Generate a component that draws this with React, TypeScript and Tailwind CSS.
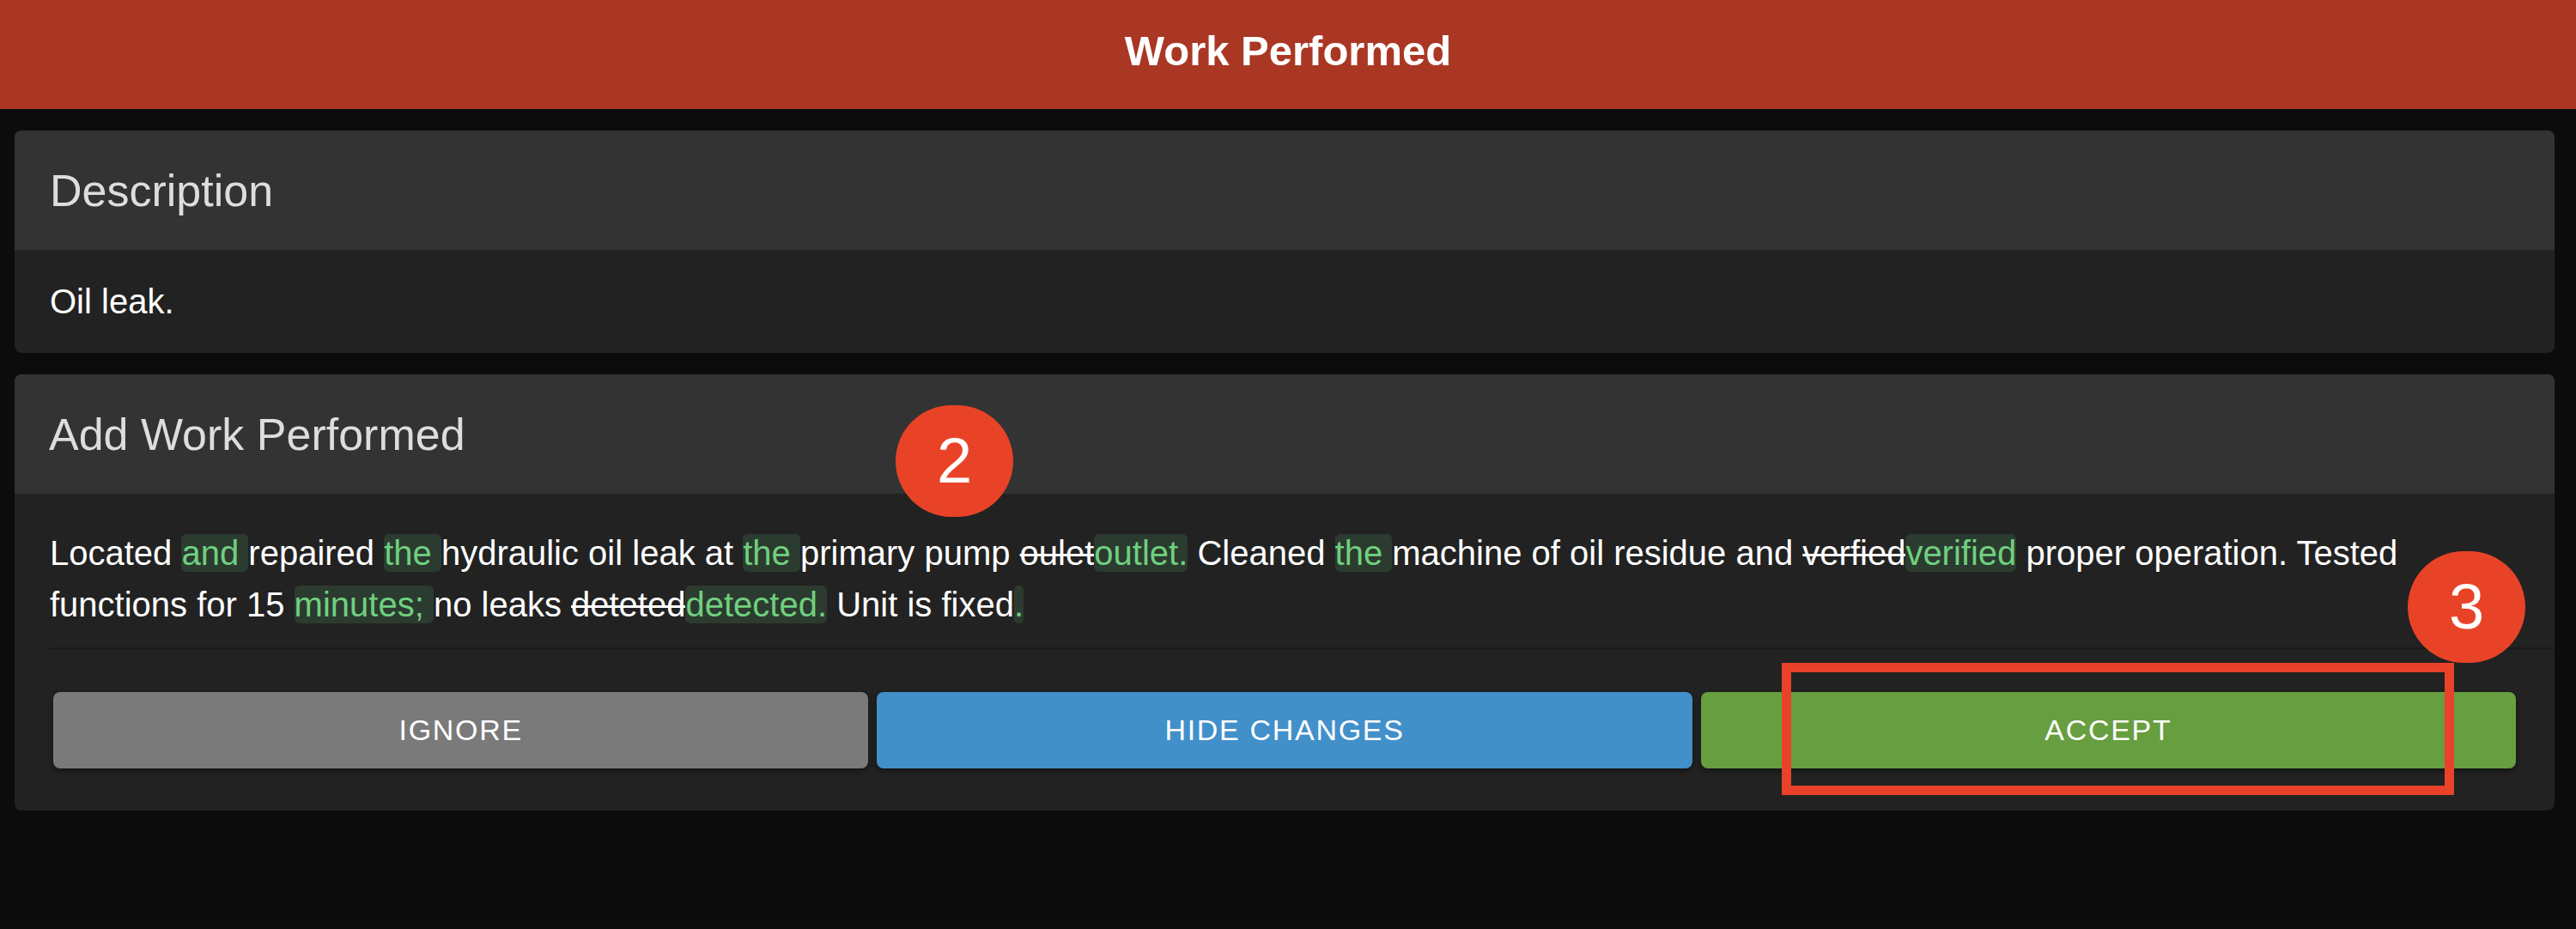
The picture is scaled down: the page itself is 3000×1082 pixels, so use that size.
// Work Performed — Änderungsvorschau (dark, Diff-Hervorhebung).

const FONT = "font-['Liberation_Sans',Arial,sans-serif]";

type Part = { t: string; kind?: 'add' | 'del' };

const PARTS: Part[] = [
  { t: 'Located ' },
  { t: 'and ', kind: 'add' },
  { t: 'repaired ' },
  { t: 'the ', kind: 'add' },
  { t: 'hydraulic oil leak at ' },
  { t: 'the ', kind: 'add' },
  { t: 'primary pump ' },
  { t: 'oulet', kind: 'del' },
  { t: 'outlet.', kind: 'add' },
  { t: ' Cleaned ' },
  { t: 'the ', kind: 'add' },
  { t: 'machine of oil residue and ' },
  { t: 'verfied', kind: 'del' },
  { t: 'verified', kind: 'add' },
  { t: ' proper operation. Tested functions for 15 ' },
  { t: 'minutes; ', kind: 'add' },
  { t: 'no leaks ' },
  { t: 'deteted', kind: 'del' },
  { t: 'detected.', kind: 'add' },
  { t: ' Unit is fixed' },
  { t: '.', kind: 'add' },
];

function DiffText() {
  return (
    <p className="text-[40px] leading-[60px] text-white">
      {PARTS.map((p, i) => {
        if (p.kind === 'add') {
          return (
            <span key={i} className="rounded-[6px] bg-[#2c3b2f] text-[#6fd07f]">
              {p.t}
            </span>
          );
        }
        if (p.kind === 'del') {
          return (
            <span key={i} className="line-through decoration-[3px]">
              {p.t}
            </span>
          );
        }
        return <span key={i}>{p.t}</span>;
      })}
    </p>
  );
}

function Badge({ n, className }: { n: string; className: string }) {
  return (
    <div
      className={`absolute flex items-center justify-center w-[137px] h-[130px] rounded-full bg-[#e94327] text-white text-[74px] leading-none ${className}`}
    >
      {n}
    </div>
  );
}

export default function App() {
  return (
    <div className={`relative min-h-screen bg-[#0c0c0c] ${FONT}`}>
      {/* Header */}
      <div className="h-[127px] bg-[#aa3723] flex items-center justify-center pb-[8px]">
        <h1 className="text-[49px] font-bold text-white">Work Performed</h1>
      </div>

      {/* Description */}
      <div className="ml-[17px] mr-[25px] mt-[25px] rounded-[8px] overflow-hidden bg-[#222222]">
        <div className="h-[139px] bg-[#333333] flex items-center px-[41px]">
          <h2 className="text-[52px] text-[#dddddd]">Description</h2>
        </div>
        <div className="px-[41px] py-[30px] text-[40px] leading-[60px] text-white">Oil leak.</div>
      </div>

      {/* Add Work Performed */}
      <div className="ml-[17px] mr-[25px] mt-[25px] rounded-[8px] overflow-hidden bg-[#222222]">
        <div className="h-[139px] bg-[#333333] flex items-center px-[40px]">
          <h2 className="text-[52px] text-[#dddddd]">Add Work Performed</h2>
        </div>
        <div className="px-[41px] pt-[39px] pb-[20px]">
          <DiffText />
        </div>
        <div className="ml-[40px] border-t-2 border-[#1a1a1a]" />
        <div className="grid grid-cols-3 gap-[10px] px-[45px] pt-[50px] pb-[49px]">
          <button className="h-[89px] rounded-[8px] bg-[#7a7a7a] text-white text-[34px] tracking-[0.05em] shadow-[0_3px_6px_rgba(0,0,0,0.45)]">
            IGNORE
          </button>
          <button className="h-[89px] rounded-[8px] bg-[#4290ca] text-white text-[34px] tracking-[0.05em] shadow-[0_3px_6px_rgba(0,0,0,0.45)]">
            HIDE CHANGES
          </button>
          <button className="h-[89px] rounded-[8px] bg-[#679e3f] text-white text-[34px] tracking-[0.05em] shadow-[0_3px_6px_rgba(0,0,0,0.45)]">
            ACCEPT
          </button>
        </div>
      </div>

      {/* Annotations */}
      <Badge n="2" className="left-[1043px] top-[472px]" />
      <Badge n="3" className="left-[2804px] top-[642px]" />
      <div className="absolute left-[2075px] top-[772px] w-[783px] h-[154px] border-[11px] border-[#e9412a]" />
    </div>
  );
}
